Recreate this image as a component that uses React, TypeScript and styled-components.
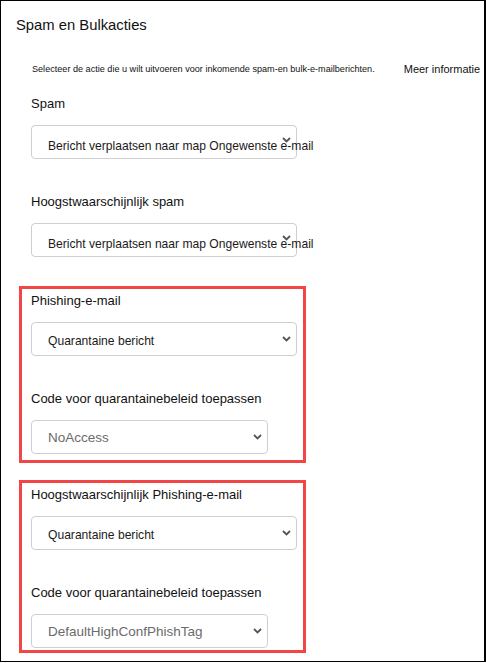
import React from "react";
import styled, { createGlobalStyle } from "styled-components";

const Global = createGlobalStyle`
  html, body { margin: 0; padding: 0; background: #fff; }
  body { font-family: "Liberation Sans", Arial, sans-serif; color: #1b1a19; }
`;

const Frame = styled.div`
  box-sizing: border-box;
  width: 486px;
  height: 662px;
  border: 1px solid #000;
  border-right-width: 2px;
  padding: 14px 0 0 15px;
  display: flex;
  flex-direction: column;
`;

const Title = styled.h1`
  margin: 0;
  font-size: 14.8px;
  line-height: 20px;
  font-weight: 400;
  color: #111;
`;

const IntroRow = styled.div`
  margin-top: 27px;
  padding-left: 16px;
  display: flex;
  align-items: center;
  gap: 29px;
  height: 14px;
`;

const Intro = styled.p`
  margin: 0;
  font-size: 9.1px;
  line-height: 14px;
  color: #111;
  white-space: nowrap;
`;

const MoreLink = styled.span`
  font-size: 11px;
  line-height: 14px;
  color: #111;
  white-space: nowrap;
`;

const Body = styled.div`
  margin-top: 19px;
  padding-left: 15px;
  display: flex;
  flex-direction: column;
`;

const Field = styled.div<{ $gapAfter?: number }>`
  display: flex;
  flex-direction: column;
  margin-bottom: ${(p) => p.$gapAfter ?? 0}px;
`;

const Label = styled.label`
  font-size: 13px;
  line-height: 18px;
  color: #111;
  margin-bottom: 12px;
  white-space: nowrap;
`;

const Select = styled.div<{ $width: number; $shift: number; $muted?: boolean }>`
  position: relative;
  box-sizing: border-box;
  width: ${(p) => p.$width}px;
  height: 34px;
  border: 1px solid #cfcfcf;
  border-radius: 4px;
  background: #fff;
  padding: ${(p) => p.$shift}px 0 0 16px;
  display: flex;
  align-items: center;
  font-size: ${(p) => (p.$muted ? 13.5 : 12.1)}px;
  color: ${(p) => (p.$muted ? "#6b6b6b" : "#1b1a19")};
  white-space: nowrap;
  overflow: visible;
`;

const SelectText = styled.span`
  position: relative;
  z-index: 1;
`;

const Chevron = styled.svg<{ $lift: number }>`
  position: absolute;
  right: 5px;
  top: 50%;
  margin-top: ${(p) => -3 - p.$lift}px;
  width: 9px;
  height: 6px;
`;

const Highlight = styled.div<{ $padBottom: number; $gapAfter?: number }>`
  box-sizing: border-box;
  width: 287px;
  margin-left: -12px;
  border: 3px solid #f24646;
  padding: 3px 0 ${(p) => p.$padBottom}px 9px;
  display: flex;
  flex-direction: column;
  margin-bottom: ${(p) => p.$gapAfter ?? 0}px;
`;

type DropProps = {
  value: string;
  width?: number;
  shift?: number;
  lift?: number;
  muted?: boolean;
};

const Dropdown = ({ value, width = 266, shift = 0, lift = 0, muted }: DropProps) => (
  <Select $width={width} $shift={shift} $muted={muted}>
    <Chevron $lift={lift} viewBox="0 0 9 6">
      <path d="M1 1 L4.5 4.5 L8 1" fill="none" stroke="#555" strokeWidth="1.8" />
    </Chevron>
    <SelectText>{value}</SelectText>
  </Select>
);

export default function App() {
  return (
    <>
      <Global />
      <Frame>
        <Title>Spam en Bulkacties</Title>
        <IntroRow>
          <Intro>Selecteer de actie die u wilt uitvoeren voor inkomende spam-en bulk-e-mailberichten.</Intro>
          <MoreLink>Meer informatie</MoreLink>
        </IntroRow>
        <Body>
          <Field $gapAfter={34}>
            <Label>Spam</Label>
            <Dropdown value="Bericht verplaatsen naar map Ongewenste e-mail" shift={8} lift={2} />
          </Field>
          <Field $gapAfter={29}>
            <Label>Hoogstwaarschijnlijk spam</Label>
            <Dropdown value="Bericht verplaatsen naar map Ongewenste e-mail" shift={8} lift={2} />
          </Field>
          <Highlight $padBottom={6} $gapAfter={17}>
            <Field $gapAfter={34}>
              <Label>Phishing-e-mail</Label>
              <Dropdown value="Quarantaine bericht" shift={4} />
            </Field>
            <Field>
              <Label>Code voor quarantainebeleid toepassen</Label>
              <Dropdown value="NoAccess" width={237} muted />
            </Field>
          </Highlight>
          <Highlight $padBottom={2}>
            <Field $gapAfter={34}>
              <Label>Hoogstwaarschijnlijk Phishing-e-mail</Label>
              <Dropdown value="Quarantaine bericht" shift={4} />
            </Field>
            <Field>
              <Label>Code voor quarantainebeleid toepassen</Label>
              <Dropdown value="DefaultHighConfPhishTag" width={237} muted />
            </Field>
          </Highlight>
        </Body>
      </Frame>
    </>
  );
}
